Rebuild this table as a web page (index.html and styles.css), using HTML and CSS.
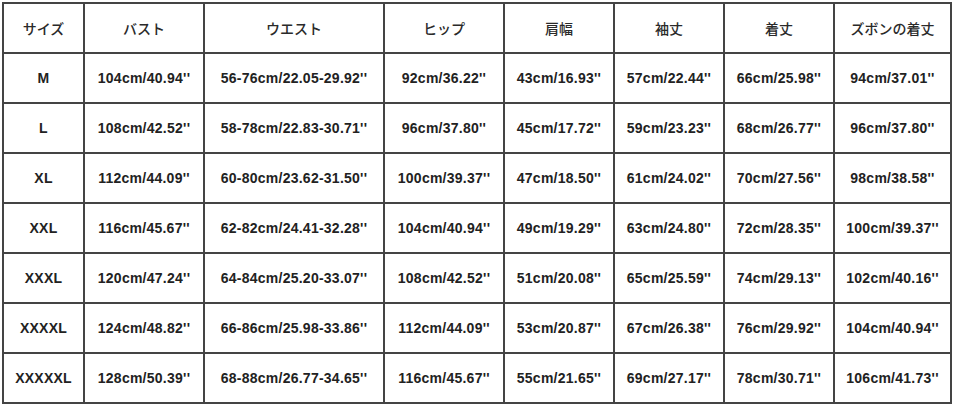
FILE: index.html
```html
<!DOCTYPE html>
<html lang="ja">
<head>
<meta charset="utf-8">
<link rel="stylesheet" href="styles.css">
</head>
<body>
<div class="chart">
  <div class="cell head">サイズ</div>
  <div class="cell head">バスト</div>
  <div class="cell head">ウエスト</div>
  <div class="cell head">ヒップ</div>
  <div class="cell head">肩幅</div>
  <div class="cell head">袖丈</div>
  <div class="cell head">着丈</div>
  <div class="cell head">ズボンの着丈</div>

  <div class="cell">M</div>
  <div class="cell">104cm/40.94''</div>
  <div class="cell">56-76cm/22.05-29.92''</div>
  <div class="cell">92cm/36.22''</div>
  <div class="cell">43cm/16.93''</div>
  <div class="cell">57cm/22.44''</div>
  <div class="cell">66cm/25.98''</div>
  <div class="cell">94cm/37.01''</div>

  <div class="cell">L</div>
  <div class="cell">108cm/42.52''</div>
  <div class="cell">58-78cm/22.83-30.71''</div>
  <div class="cell">96cm/37.80''</div>
  <div class="cell">45cm/17.72''</div>
  <div class="cell">59cm/23.23''</div>
  <div class="cell">68cm/26.77''</div>
  <div class="cell">96cm/37.80''</div>

  <div class="cell">XL</div>
  <div class="cell">112cm/44.09''</div>
  <div class="cell">60-80cm/23.62-31.50''</div>
  <div class="cell">100cm/39.37''</div>
  <div class="cell">47cm/18.50''</div>
  <div class="cell">61cm/24.02''</div>
  <div class="cell">70cm/27.56''</div>
  <div class="cell">98cm/38.58''</div>

  <div class="cell">XXL</div>
  <div class="cell">116cm/45.67''</div>
  <div class="cell">62-82cm/24.41-32.28''</div>
  <div class="cell">104cm/40.94''</div>
  <div class="cell">49cm/19.29''</div>
  <div class="cell">63cm/24.80''</div>
  <div class="cell">72cm/28.35''</div>
  <div class="cell">100cm/39.37''</div>

  <div class="cell">XXXL</div>
  <div class="cell">120cm/47.24''</div>
  <div class="cell">64-84cm/25.20-33.07''</div>
  <div class="cell">108cm/42.52''</div>
  <div class="cell">51cm/20.08''</div>
  <div class="cell">65cm/25.59''</div>
  <div class="cell">74cm/29.13''</div>
  <div class="cell">102cm/40.16''</div>

  <div class="cell">XXXXL</div>
  <div class="cell">124cm/48.82''</div>
  <div class="cell">66-86cm/25.98-33.86''</div>
  <div class="cell">112cm/44.09''</div>
  <div class="cell">53cm/20.87''</div>
  <div class="cell">67cm/26.38''</div>
  <div class="cell">76cm/29.92''</div>
  <div class="cell">104cm/40.94''</div>

  <div class="cell">XXXXXL</div>
  <div class="cell">128cm/50.39''</div>
  <div class="cell">68-88cm/26.77-34.65''</div>
  <div class="cell">116cm/45.67''</div>
  <div class="cell">55cm/21.65''</div>
  <div class="cell">69cm/27.17''</div>
  <div class="cell">78cm/30.71''</div>
  <div class="cell">106cm/41.73''</div>
</div>
</body>
</html>
```

FILE: styles.css
```css
html, body {
  margin: 0;
  padding: 0;
  background: #ffffff;
}

body {
  padding: 2px 0 0 2px;
}

.chart {
  display: grid;
  grid-template-columns: 81px 120px 180px 120px 110px 110px 110px 117px;
  grid-auto-rows: 50px;
  width: max-content;
  border-top: 2px solid #444;
  border-left: 2px solid #444;
}

.cell {
  box-sizing: border-box;
  border-right: 2px solid #444;
  border-bottom: 2px solid #444;
  display: flex;
  align-items: center;
  justify-content: center;
  font-family: "Liberation Sans", Arial, sans-serif;
  font-weight: bold;
  font-size: 14px;
  letter-spacing: 0.25px;
  color: #222;
  white-space: nowrap;
}

.head {
  font-family: "Noto Sans CJK JP", "Liberation Sans", sans-serif;
  font-weight: 500;
  font-size: 14px;
  letter-spacing: 0;
  color: #2a2a2a;
}
```
